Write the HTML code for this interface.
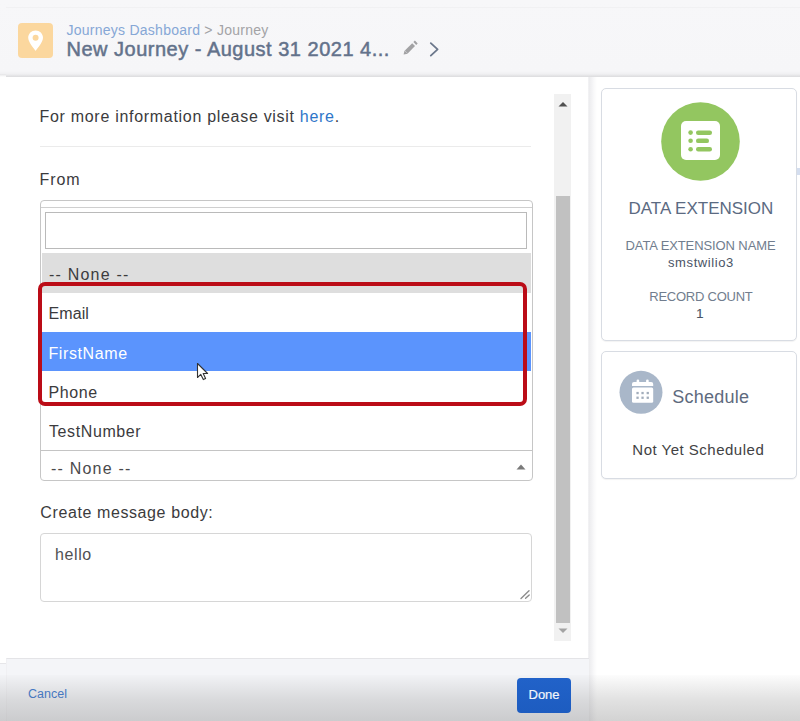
<!DOCTYPE html>
<html><head><meta charset="utf-8">
<style>
*{box-sizing:border-box;margin:0;padding:0}
html,body{width:800px;height:721px;overflow:hidden;background:#fff;font-family:"Liberation Sans",sans-serif}
.abs{position:absolute}
.nw{white-space:nowrap;line-height:1}
#hdr{left:0;top:0;width:800px;height:77px;background:linear-gradient(#f7f7f9 0,#f6f6f8 71px,#f0f0f2 74px,#e2e2e4 76px,#dcdcde 77px)}
#topline{left:6px;top:7px;width:794px;height:1px;background:#f1f1f3}
#jicon{left:18px;top:23px;width:35px;height:35px;background:#fbd79e;border-radius:4px}
.bc{left:66.5px;top:23.3px;font-size:14px;color:#86a7d6;letter-spacing:0.25px}
.bc span{color:#a3a3a6}
.ttl{left:66.5px;top:38.5px;font-size:20px;color:#63728b;-webkit-text-stroke:0.5px #63728b;letter-spacing:0.5px}
#left{left:6px;top:77px;width:583px;height:582px;background:#fff}
#sep{left:588px;top:77px;width:9px;height:645px;background:linear-gradient(90deg,#f4f4f6 0,#ededef 1.5px,#f2f2f4 3.5px,#f9f9fa 6px,#fff 9px)}
#right{left:597px;top:77px;width:203px;height:645px;background:#fff}
.t16{font-size:16px;color:#3b3b3d;letter-spacing:0.6px}
#footer{left:6px;top:658px;width:583px;height:63px;border-top:1px solid #e4e4e7;border-left:1px solid #f0f0f3;background:#f4f5f8}
#vign{left:0;top:675px;width:800px;height:46px;background:linear-gradient(rgba(120,120,120,0.02) 0,rgba(120,120,120,0.1) 10px,rgba(120,120,120,0.22) 25px,rgba(120,120,120,0.33) 46px)}
.card{background:#fff;border:1px solid #d8dce3;border-radius:5px;box-shadow:0 1px 1px rgba(0,0,0,0.05)}
.opt{left:42px;width:489px;height:39.4px}
.lbl{font-size:13px;color:#717d8e}
</style></head><body>
<div id="hdr" class="abs"></div>
<div id="topline" class="abs"></div>
<div class="abs" style="left:0;top:74px;width:6px;height:3px;background:linear-gradient(#e4e4e6,#fff)"></div>
<div id="jicon" class="abs">
<svg width="35" height="35" viewBox="0 0 35 35"><path d="M17.6 7.5c-4.1 0-7.4 3.2-7.4 7.2 0 4.6 7.4 13 7.4 13s7.4-8.4 7.4-13c0-4-3.3-7.2-7.4-7.2zm0 10.3a3 3 0 1 1 0-6 3 3 0 0 1 0 6z" fill="#fff"/></svg>
</div>
<div class="abs nw bc">Journeys Dashboard <span>&gt; Journey</span></div>
<div class="abs nw ttl">New Journey - August 31 2021 4...</div>
<svg class="abs" style="left:395px;top:35px" width="50" height="27" viewBox="0 0 50 27">
<path d="M8.6 19.6L9.5 15.4L12.8 18.7Z" fill="#a2a2a4"/>
<path d="M11.3 17L18.6 9.7" stroke="#a2a2a4" stroke-width="4"/>
<path d="M19.8 8.5L21.3 7" stroke="#a2a2a4" stroke-width="4"/>
<path d="M35.8 8.2L42.6 14.4L35.8 20.6" stroke="#6b778b" stroke-width="1.8" fill="none" stroke-linecap="round" stroke-linejoin="round"/>
</svg>

<div id="left" class="abs"></div>
<div id="sep" class="abs"></div>
<div id="right" class="abs"></div>

<div class="abs nw t16" style="left:39.5px;top:109px;letter-spacing:0.7px">For more information please visit <span style="color:#2e76c9">here</span>.</div>
<div class="abs" style="left:40px;top:146px;width:491px;height:1px;background:#ebebeb"></div>
<div class="abs nw t16" style="left:39.5px;top:172px;letter-spacing:0.9px">From</div>

<!-- dropdown -->
<div class="abs" style="left:40px;top:200px;width:493px;height:281px;border:1px solid #c6c6c6;border-radius:4px;background:#fff"></div>
<div class="abs" style="left:41px;top:207px;width:491px;height:1px;background:#cfcfcf"></div>
<div class="abs" style="left:45px;top:212px;width:482px;height:37px;border:1px solid #bababa;background:#fff"></div>
<div class="abs opt" style="top:253.4px;background:#dedede"></div>
<div class="abs opt" style="top:332px;background:#5b94fd"></div>
<div class="abs nw t16" style="left:49px;top:267px;letter-spacing:1.2px">-- None --</div>
<div class="abs nw t16" style="left:48.5px;top:306px;letter-spacing:0.1px">Email</div>
<div class="abs nw t16" style="left:48.5px;top:346px;color:#fff">FirstName</div>
<div class="abs nw t16" style="left:48.5px;top:385px">Phone</div>
<div class="abs nw t16" style="left:49px;top:424px">TestNumber</div>
<div class="abs" style="left:41px;top:450px;width:491px;height:1px;background:#c4c4c4"></div>
<div class="abs nw t16" style="left:51px;top:461px;letter-spacing:1.2px;color:#4a4a4c">-- None --</div>
<svg class="abs" style="left:516px;top:463px" width="10" height="8" viewBox="0 0 10 8"><path d="M0.5 6.5L5 1.5 9.5 6.5z" fill="#7a7a7a"/></svg>
<!-- red highlight -->
<div class="abs" style="left:38px;top:282px;width:489px;height:124px;border:4px solid #bb0c17;border-radius:7px"></div>

<svg class="abs" style="left:196px;top:362px" width="14" height="20" viewBox="0 0 14 20"><path d="M1.5 1.5V15.5L4.8 12.4L7.3 17.6L9.6 16.5L7.2 11.5H11.6Z" fill="#fff" stroke="#333" stroke-width="1.1" stroke-linejoin="round"/></svg>
<!-- scrollbar -->
<div class="abs" style="left:554px;top:94px;width:17px;height:547px;background:#f1f1f1"></div>
<div class="abs" style="left:556px;top:196px;width:14px;height:427px;background:#c1c1c1"></div>
<svg class="abs" style="left:557px;top:100px" width="12" height="8" viewBox="0 0 12 8"><path d="M1.5 6.5L6 2 10.5 6.5z" fill="#505050"/></svg>
<svg class="abs" style="left:557px;top:627px" width="12" height="8" viewBox="0 0 12 8"><path d="M1.5 1.5L6 6 10.5 1.5z" fill="#a3a3a3"/></svg>

<div class="abs nw t16" style="left:40.3px;top:505px">Create message body:</div>
<div class="abs" style="left:40px;top:533px;width:492px;height:69px;border:1px solid #d6d6d6;border-radius:4px;background:#fff"></div>
<div class="abs nw t16" style="left:55px;top:547px;color:#505052">hello</div>
<svg class="abs" style="left:520px;top:589px" width="12" height="12" viewBox="0 0 12 12"><path d="M1 9.4L9 1.8M5.6 9.3L9.2 6" stroke="#8c8c8c" stroke-width="1.4" stroke-linecap="round"/></svg>

<!-- right cards -->
<div class="abs card" style="left:600.5px;top:88px;width:196px;height:252.5px"></div>
<div class="abs" style="left:797px;top:168px;width:3px;height:7px;background:#d4deef"></div>
<svg class="abs" style="left:660px;top:101px" width="81" height="81" viewBox="0 0 81 81">
<circle cx="40.5" cy="40.5" r="39.3" fill="#93c660"/>
<rect x="21" y="20" width="39" height="39" rx="5" fill="#fff"/>
<circle cx="30.6" cy="31.6" r="2.3" fill="#93c660"/><circle cx="30.6" cy="39.8" r="2.3" fill="#93c660"/><circle cx="30.6" cy="48.2" r="2.3" fill="#93c660"/>
<rect x="36" y="29.4" width="16" height="4.5" rx="2.2" fill="#93c660"/><rect x="36" y="37.6" width="13" height="4.5" rx="2.2" fill="#93c660"/><rect x="36" y="46" width="16" height="4.5" rx="2.2" fill="#93c660"/>
</svg>
<div class="abs nw" style="left:628.5px;top:200px;font-size:17px;color:#5b6a82">DATA EXTENSION</div>
<div class="abs nw lbl" style="left:625.5px;top:239px;letter-spacing:-0.1px">DATA EXTENSION NAME</div>
<div class="abs nw" style="left:668px;top:256px;font-size:13px;color:#4a5466;letter-spacing:0.6px">smstwilio3</div>
<div class="abs nw lbl" style="left:649.3px;top:290px;letter-spacing:-0.25px">RECORD COUNT</div>
<div class="abs nw" style="left:696.3px;top:307px;font-size:13px;color:#4a5466;-webkit-text-stroke:0.2px #4a5466">1</div>

<div class="abs card" style="left:600.5px;top:350.7px;width:196px;height:128px"></div>
<svg class="abs" style="left:619px;top:370px" width="45" height="45" viewBox="0 0 45 45">
<circle cx="22" cy="22.3" r="21.5" fill="#a9b7c9"/>
<path d="M13 14a2 2 0 0 1 2-2h17.2a2 2 0 0 1 2 2v2H13z" fill="#fff"/>
<rect x="13" y="17.5" width="21.2" height="15.3" rx="1.5" fill="#fff"/>
<rect x="17.6" y="9.6" width="2.6" height="4" rx="1.2" fill="#fff"/><rect x="27.1" y="9.6" width="2.6" height="4" rx="1.2" fill="#fff"/>
<g fill="#a2adbb"><rect x="17.4" y="21.9" width="2.3" height="2.3"/><rect x="22.4" y="21.9" width="2.3" height="2.3"/><rect x="27.6" y="21.9" width="2.3" height="2.3"/><rect x="17.4" y="26.6" width="2.3" height="2.3"/><rect x="22.4" y="26.6" width="2.3" height="2.3"/><rect x="27.6" y="26.6" width="2.3" height="2.3"/></g>
</svg>
<div class="abs nw" style="left:672.3px;top:388px;font-size:18px;color:#5e6a7e;letter-spacing:0.25px">Schedule</div>
<div class="abs nw" style="left:632.3px;top:442px;font-size:15px;color:#424244;letter-spacing:0.5px">Not Yet Scheduled</div>

<div class="abs" style="left:0;top:663px;width:6px;height:58px;border-top:1px solid #e6e6e9;background:#f5f6f9"></div>
<div id="footer" class="abs"></div>
<div class="abs nw" style="left:28px;top:688px;font-size:12.5px;color:#3b78cf">Cancel</div>
<div id="vign" class="abs"></div>
<div class="abs" style="left:517px;top:677.5px;width:54px;height:35px;background:linear-gradient(#2162c9,#1d5cc0);border-radius:4px"></div>
<div class="abs nw" style="left:528.5px;top:688px;font-size:13px;color:#f2f5fb;-webkit-text-stroke:0.2px #f2f5fb">Done</div>
</body></html>
